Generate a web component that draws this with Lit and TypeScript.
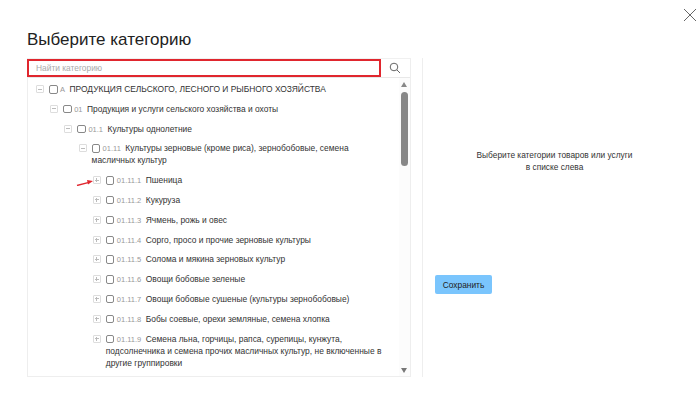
import { LitElement, html, css, svg } from "lit";
import { customElement } from "lit/decorators.js";

type Node = { d: number; open: boolean; code: string; text: string };
const rows: Node[] = [
  { d: 0, open: true, code: "A", text: "ПРОДУКЦИЯ СЕЛЬСКОГО, ЛЕСНОГО И РЫБНОГО ХОЗЯЙСТВА" },
  { d: 1, open: true, code: "01", text: "Продукция и услуги сельского хозяйства и охоты" },
  { d: 2, open: true, code: "01.1", text: "Культуры однолетние" },
  { d: 3, open: true, code: "01.11", text: "Культуры зерновые (кроме риса), зернобобовые, семена масличных культур" },
  { d: 4, open: false, code: "01.11.1", text: "Пшеница" },
  { d: 4, open: false, code: "01.11.2", text: "Кукуруза" },
  { d: 4, open: false, code: "01.11.3", text: "Ячмень, рожь и овес" },
  { d: 4, open: false, code: "01.11.4", text: "Сорго, просо и прочие зерновые культуры" },
  { d: 4, open: false, code: "01.11.5", text: "Солома и мякина зерновых культур" },
  { d: 4, open: false, code: "01.11.6", text: "Овощи бобовые зеленые" },
  { d: 4, open: false, code: "01.11.7", text: "Овощи бобовые сушеные (культуры зернобобовые)" },
  { d: 4, open: false, code: "01.11.8", text: "Бобы соевые, орехи земляные, семена хлопка" },
  { d: 4, open: false, code: "01.11.9", text: "Семена льна, горчицы, рапса, сурепицы, кунжута, подсолнечника и семена прочих масличных культур, не включенные в другие группировки" },
];

@customElement("app-root")
export class AppRoot extends LitElement {
  static styles = css`
    :host { display: block; width: 700px; height: 406px; background: #fff; position: relative; overflow: hidden;
      font-family: "Liberation Sans", Arial, sans-serif; color: #333; }
    .close { position: absolute; left: 683px; top: 8px; width: 14px; height: 14px; }
    .wrap { padding: 29px 0 0 27px; display: flex; flex-direction: column; }
    h1 { margin: 0 0 8px; font-size: 17px; line-height: 21px; font-weight: 400; color: #222; }
    .cols { display: flex; }
    .left { width: 384px; height: 319px; display: flex; flex-direction: column; border: 1px solid #eee; border-top-color: #f0f0f0; box-sizing: border-box; }
    .search { display: flex; height: 18px; flex: none; border-bottom: 1px solid #e8e8e8; }
    .input { width: 354px; margin-left: -1px; box-sizing: border-box; border: 2px solid #e0262e; font-size: 8.4px; color: #aaa; padding-left: 7px; display: flex; align-items: center; }
    .sbtn { flex: 1; display: flex; align-items: center; justify-content: center; padding-right: 2px; }
    .body { flex: 1; display: flex; position: relative; min-height: 0; }
    .tree { flex: 1; padding: 5px 6px 0 8px; min-width: 0; }
    .row { display: flex; padding-bottom: 7.8px; font-size: 8.43px; line-height: 12px; }
    .tog { flex: none; width: 8px; height: 8px; box-sizing: border-box; border: 1px solid #ddd; margin: 2px 5px 0 0; position: relative; border-radius: 1px; }
    .tog::before { content: ""; position: absolute; left: 1px; right: 1px; top: 2.5px; height: 1px; background: #bbb; }
    .tog.plus::after { content: ""; position: absolute; top: 1px; bottom: 1px; left: 2.5px; width: 1px; background: #bbb; }
    .txt { flex: 1; min-width: 0; }
    .cb { display: inline-block; width: 8.5px; height: 8.5px; box-sizing: border-box; border: 1px solid #888; border-radius: 2px; vertical-align: top; margin: 2px 2.5px 0 0; }
    .code { color: #999; font-size: 7.5px; line-height: 1; margin-right: 4.5px; }
    .sb { flex: none; width: 11px; position: relative; background: #fcfcfc; }
    .sb .up, .sb .down { position: absolute; left: 2px; width: 0; height: 0; border-left: 3.5px solid transparent; border-right: 3.5px solid transparent; }
    .sb .up { top: 4px; border-bottom: 5px solid #888; }
    .sb .down { bottom: 3px; border-top: 5px solid #777; }
    .sb .thumb { position: absolute; left: 2px; width: 7px; top: 14px; height: 74px; background: #888; border-radius: 4px; }
    .arrow { position: absolute; left: 48px; top: 100px; width: 18px; height: 8px; }
    .right { margin-left: 11px; width: 230px; height: 319px; box-sizing: border-box; border-left: 1px solid #eee; display: flex; flex-direction: column; }
    .hint { margin-top: 91px; height: 126px; font-size: 8.34px; line-height: 12px; text-align: center; padding-left: 34px; color: #333; }
    .save { align-self: flex-start; margin-left: 12px; width: 57px; height: 19px; background: #7ac5fd; border-radius: 2px; font-size: 8.4px; color: #222; display: flex; align-items: center; justify-content: center; }
  `;

  render() {
    return html`
      <svg class="close" viewBox="0 0 14 14"><path d="M1 1 13 13M13 1 1 13" stroke="#666" stroke-width="1" fill="none"/></svg>
      <div class="wrap">
        <h1>Выберите категорию</h1>
        <div class="cols">
          <div class="left">
            <div class="search">
              <div class="input">Найти категорию</div>
              <div class="sbtn"><svg width="12" height="12" viewBox="0 0 12 12"><circle cx="5" cy="5" r="3.8" stroke="#666" fill="none"/><path d="M7.8 7.8 11 11" stroke="#666" fill="none"/></svg></div>
            </div>
            <div class="body">
              <div class="tree">
                ${rows.map((r) => html`
                  <div class="row" style="margin-left:${r.d * 14.2}px">
                    <span class="tog ${r.open ? "" : "plus"}"></span>
                    <div class="txt"><span class="cb"></span><span class="code">${r.code}</span>${r.text}</div>
                  </div>`)}
              </div>
              <div class="sb"><div class="up"></div><div class="thumb"></div><div class="down"></div></div>
              <svg class="arrow" viewBox="0 0 18 8">${svg`<path d="M1 7.5 12 4.6" stroke="#e0262e" stroke-width="1.4" fill="none"/><path d="M17 3 11 2 12 6.5Z" fill="#e0262e"/>`}</svg>
            </div>
          </div>
          <div class="right">
            <div class="hint">Выберите категории товаров или услуги<br/>в списке слева</div>
            <div class="save">Сохранить</div>
          </div>
        </div>
      </div>
    `;
  }
}
